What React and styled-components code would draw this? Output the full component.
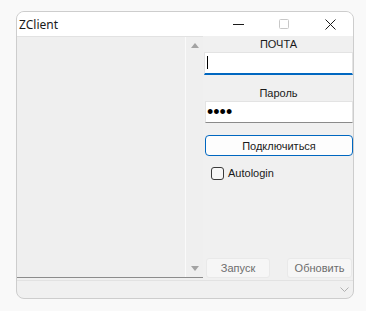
import React from 'react'
import styled, {createGlobalStyle} from 'styled-components'

const GlobalStyle = createGlobalStyle`
  html, body {
    margin: 0;
    background: #f9f9f9;
  }
  body {
    padding: 11px 0 0 16px;
    font-family: "Liberation Sans", Arial, sans-serif;
    font-size: 11px;
    color: #1a1a1a;
  }
`

const Window = styled.div`
  box-sizing: border-box;
  width: 338px;
  height: 288px;
  border: 1px solid #cdcdcd;
  border-radius: 8px;
  overflow: hidden;
  background: #f0f0f0;
  display: flex;
  flex-direction: column;
`

const TitleBar = styled.div`
  height: 24px;
  background: #ffffff;
  display: flex;
  align-items: center;
  flex-shrink: 0;
`

const Title = styled.div`
  flex: 1;
  padding-left: 2px;
  font-family: "Noto Sans", "Open Sans", sans-serif;
  font-size: 12px;
  color: #1a1a1a;
`

const CaptionButton = styled.div`
  width: 46px;
  height: 24px;
  display: flex;
  align-items: center;
  justify-content: center;
`

const Main = styled.div`
  height: 242px;
  display: flex;
  flex-shrink: 0;
`

const ListBox = styled.div`
  box-sizing: border-box;
  width: 186px;
  display: flex;
  border-top: 1px solid #e2e2e2;
  border-bottom: 1px solid #8c8c8c;
  background: #efefef;
`

const ListItems = styled.div`
  flex: 1;
`

const ScrollBar = styled.div`
  width: 17px;
  border-left: 1px solid #fafafa;
  display: flex;
  flex-direction: column;
  justify-content: space-between;
  align-items: center;
  padding: 6px 0 6px;
`

const Arrow = styled.div`
  width: 0;
  height: 0;
  border-left: 4px solid transparent;
  border-right: 4px solid transparent;
  ${({down}) => down
    ? 'border-top: 5px solid #a3a3a3;'
    : 'border-bottom: 5px solid #a3a3a3;'}
`

const Panel = styled.div`
  flex: 1;
  display: flex;
  flex-direction: column;
  padding-left: 1px;
`

const Label = styled.div`
  height: 16px;
  line-height: 16px;
  text-align: center;
  margin-top: ${({top}) => top || 0}px;
`

const TextBox = styled.input`
  box-sizing: border-box;
  display: block;
  width: ${({indent}) => 149 - (indent || 0)}px;
  margin-left: ${({indent}) => indent || 0}px;
  height: ${({h}) => h}px;
  padding: 0 0 0 ${({password}) => password ? 1 : 3}px;
  background: #ffffff;
  border: 1px solid #e3e3e3;
  border-bottom: ${({focused}) => focused ? '2px solid #0067c0' : '1px solid #8a8a8a'};
  border-radius: 0;
  outline: none;
  font-family: "Liberation Sans", Arial, sans-serif;
  font-size: ${({password}) => password ? 18 : 11}px;
  color: #000;
`

const Caret = styled.div`
  position: relative;
  height: 0;
  &::after {
    content: '';
    position: absolute;
    left: 3px;
    top: -19px;
    width: 1px;
    height: 13px;
    background: #000;
  }
`

const ConnectButton = styled.button`
  box-sizing: border-box;
  margin: 12px 0 0 1px;
  width: 148px;
  height: 21px;
  background: #fdfdfd;
  border: 1px solid #0067c0;
  border-radius: 4px;
  font-family: "Liberation Sans", Arial, sans-serif;
  font-size: 11px;
  color: #1a1a1a;
  padding: 0;
`

const CheckRow = styled.label`
  display: flex;
  align-items: center;
  gap: 4px;
  margin: 10px 0 0 7px;
  height: 14px;
`

const CheckBox = styled.span`
  box-sizing: border-box;
  width: 13px;
  height: 13px;
  border: 1px solid #3a3a3a;
  border-radius: 3px;
  background: #f7f7f7;
`

const Spacer = styled.div`
  flex: 1;
`

const BottomRow = styled.div`
  display: flex;
  justify-content: space-between;
  padding: 0 1px 0 2px;
`

const FlatButton = styled.button`
  box-sizing: border-box;
  width: ${({w}) => w}px;
  height: 20px;
  background: #f6f6f6;
  border: 1px solid #e9e9e9;
  border-radius: 3px;
  font-family: "Liberation Sans", Arial, sans-serif;
  font-size: 11px;
  color: #6d6d6d;
  padding: 0;
`

const StatusBar = styled.div`
  box-sizing: border-box;
  margin-top: 2px;
  flex: 1;
  border-top: 1px solid #e2e2e2;
  display: flex;
  justify-content: flex-end;
  align-items: center;
  padding-right: 4px;
`

export default function App() {
  return (
    <>
      <GlobalStyle/>
      <Window>
        <TitleBar>
          <Title>ZClient</Title>
          <CaptionButton>
            <svg width="11" height="11" viewBox="0 0 11 11">
              <line x1="0" y1="5.5" x2="11" y2="5.5" stroke="#1a1a1a" strokeWidth="1"/>
            </svg>
          </CaptionButton>
          <CaptionButton>
            <svg width="10" height="10" viewBox="0 0 10 10">
              <rect x="0.5" y="0.5" width="9" height="9" rx="1" fill="none" stroke="#c8c8c8" strokeWidth="1"/>
            </svg>
          </CaptionButton>
          <CaptionButton>
            <svg width="11" height="11" viewBox="0 0 11 11">
              <path d="M0.5 0.5 L10.5 10.5 M10.5 0.5 L0.5 10.5" stroke="#1a1a1a" strokeWidth="1" fill="none"/>
            </svg>
          </CaptionButton>
        </TitleBar>
        <Main>
          <ListBox>
            <ListItems/>
            <ScrollBar>
              <Arrow/>
              <Arrow down/>
            </ScrollBar>
          </ListBox>
          <Panel>
            <Label>ПОЧТА</Label>
            <TextBox h={23} focused defaultValue=""/>
            <Caret/>
            <Label top={10}>Пароль</Label>
            <TextBox h={22} indent={1} password type="password" defaultValue="1234"/>
            <ConnectButton>Подключиться</ConnectButton>
            <CheckRow>
              <CheckBox/>
              <span>Autologin</span>
            </CheckRow>
            <Spacer/>
            <BottomRow>
              <FlatButton w={64}>Запуск</FlatButton>
              <FlatButton w={65}>Обновить</FlatButton>
            </BottomRow>
          </Panel>
        </Main>
        <StatusBar>
          <svg width="9" height="5" viewBox="0 0 9 5">
            <polyline points="0.5,0.5 4.5,4.5 8.5,0.5" fill="none" stroke="#b0b0b0" strokeWidth="1"/>
          </svg>
        </StatusBar>
      </Window>
    </>
  )
}
